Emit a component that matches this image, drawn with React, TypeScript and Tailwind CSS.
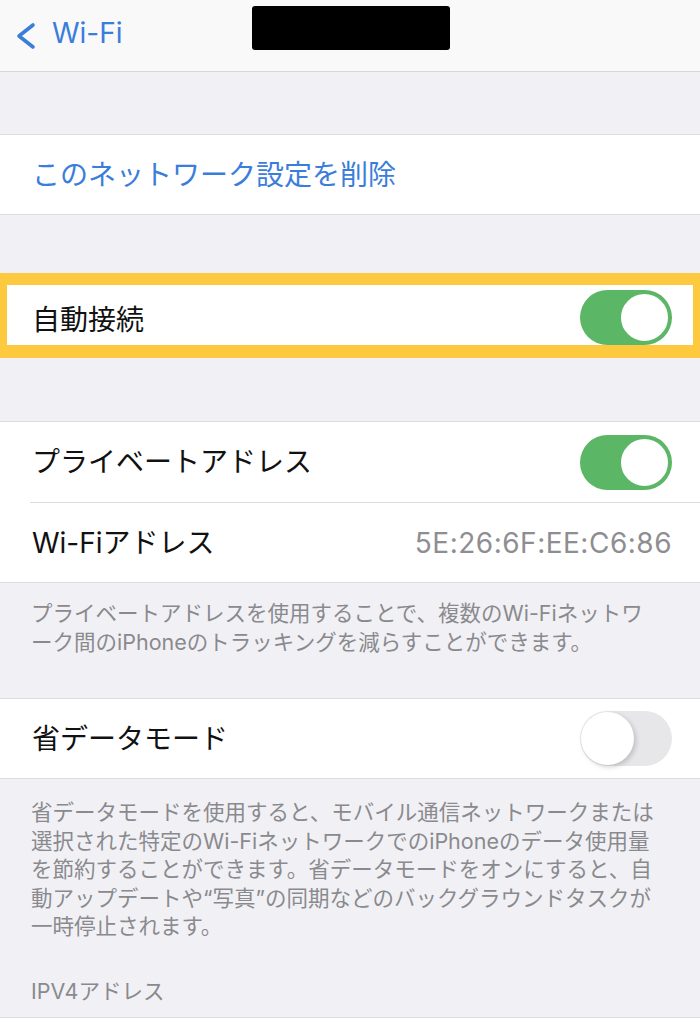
import React from "react";

const font = { fontFamily: '"Inter", "Noto Sans CJK JP", sans-serif' };

function Toggle({ on, className = "" }: { on: boolean; className?: string }) {
  if (on) {
    return (
      <div className={"relative h-[55px] w-[92px] shrink-0 rounded-full bg-[#5bb665] " + className}>
        <div className="absolute right-[1px] top-[1px] h-[53px] w-[53px] rounded-full border-[3px] border-[#5bb665] bg-white" />
      </div>
    );
  }
  return (
    <div className={"relative h-[55px] w-[92px] shrink-0 rounded-full bg-[#e7e7ea] " + className}>
      <div className="absolute left-[1px] top-[1px] h-[53px] w-[53px] rounded-full bg-white shadow-[2px_2px_5px_rgba(0,0,0,0.18)]" />
    </div>
  );
}

export default function App() {
  return (
    <div className="min-h-[1024px] w-[700px] overflow-hidden bg-[#f1f1f5]" style={font}>
      {/* Header */}
      <div className="relative flex h-[72px] items-center border-b border-[#d6d6d8] bg-[#f9f9f9] pb-[6px]">
        <div className="flex items-center pl-[14px]">
          <svg width="24" height="28" viewBox="0 0 24 28" className="mr-[14px] mt-[6px]">
            <path d="M19 3 L5 14 L19 25" fill="none" stroke="#3b7ddb" strokeWidth="3.6" strokeLinecap="round" strokeLinejoin="round" />
          </svg>
          <span className="text-[28px] leading-none text-[#3b7ddb]">Wi-Fi</span>
        </div>
        <div className="absolute left-[252px] top-[6px] h-[44px] w-[198px] rounded-[3px] bg-black" />
      </div>

      <div className="h-[62px]" />

      {/* Delete network */}
      <div className="flex h-[81px] items-center border-y border-[#dcdcdf] bg-white pl-[32px]">
        <span className="text-[28px] text-[#3b7ddb]">このネットワーク設定を削除</span>
      </div>

      <div className="h-[58px]" />

      {/* Auto-join highlighted */}
      <div className="flex h-[85px] border-x-[7px] border-b-[13px] border-t-[12px] border-[#fdc93f] bg-white pl-[25px] pr-[21px]">
        <div className="flex flex-1 items-center pt-[10px]">
          <span className="text-[28px] text-[#111]">自動接続</span>
        </div>
        <Toggle on className="self-end" />
      </div>

      <div className="h-[63px]" />

      {/* Private address section */}
      <div className="border-y border-[#dcdcdf] bg-white">
        <div className="flex h-[80px] items-center pl-[32px] pr-[28px]">
          <span className="flex-1 text-[28px] text-[#111]">プライベートアドレス</span>
          <Toggle on />
        </div>
        <div className="ml-[30px] h-px bg-[#dcdcdf]" />
        <div className="flex h-[79px] items-center pl-[32px] pr-[28px]">
          <span className="flex-1 text-[28px] text-[#111]">Wi-Fiアドレス</span>
          <span className="text-[28px] tracking-[0.5px] text-[#8e8e92]">5E:26:6F:EE:C6:86</span>
        </div>
      </div>

      <div className="px-[31px] pb-[42px] pt-[16px] text-[21.5px] leading-[28.5px] text-[#8a8a8e]">
        プライベートアドレスを使用することで、複数のWi-Fiネットワ
        <br />
        ーク間のiPhoneのトラッキングを減らすことができます。
      </div>

      {/* Low data mode */}
      <div className="flex h-[81px] items-center border-y border-[#dcdcdf] bg-white pl-[32px] pr-[28px]">
        <span className="flex-1 text-[28px] text-[#111]">省データモード</span>
        <Toggle on={false} />
      </div>

      <div className="px-[31px] pt-[19px] text-[21.5px] leading-[28.5px] text-[#8a8a8e]">
        省データモードを使用すると、モバイル通信ネットワークまたは
        <br />
        選択された特定のWi-FiネットワークでのiPhoneのデータ使用量
        <br />
        を節約することができます。省データモードをオンにすると、自
        <br />
        動アップデートや“写真”の同期などのバックグラウンドタスクが
        <br />
        一時停止されます。
      </div>

      <div className="px-[31px] pb-[12px] pt-[36px] text-[21.5px] leading-[28px] text-[#8a8a8e]">IPV4アドレス</div>

      <div className="h-[40px] border-t border-[#dcdcdf] bg-white" />
    </div>
  );
}
